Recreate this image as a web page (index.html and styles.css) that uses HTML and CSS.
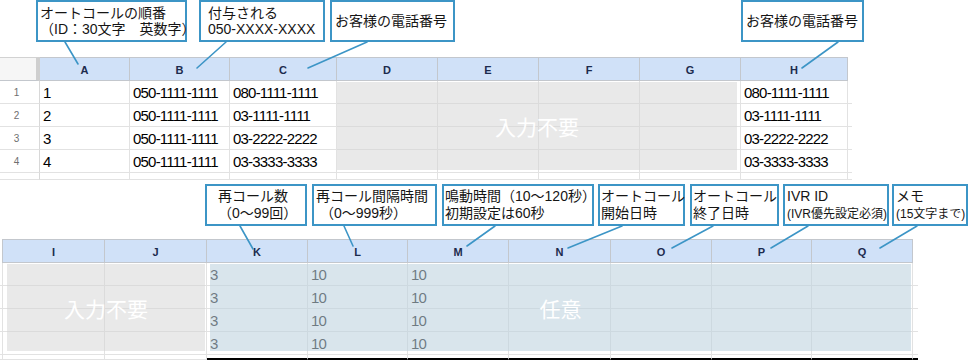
FILE: index.html
```html
<!DOCTYPE html>
<html lang="ja">
<head>
<meta charset="utf-8">
<link rel="stylesheet" href="styles.css">
</head>
<body>
<div class="page">
  <section class="part part-top">
    <div class="notes">
      <div class="note t1">オートコールの順番<br>（ID：30文字　英数字）</div>
      <div class="note t2">付与される<br>050-XXXX-XXXX</div>
      <div class="note t3 single">お客様の電話番号</div>
      <div class="note t4 single">お客様の電話番号</div>
    </div>
    <div class="stack stack-top">
      <div class="grid grid-top">
        <div class="corner"></div>
        <div class="ch">A</div><div class="ch">B</div><div class="ch">C</div><div class="ch">D</div>
        <div class="ch">E</div><div class="ch">F</div><div class="ch">G</div><div class="ch">H</div><div class="ch edge"></div>

        <div class="rh">1</div><div class="c">1</div><div class="c">050-1111-1111</div><div class="c">080-1111-1111</div>
        <div class="c"></div><div class="c"></div><div class="c"></div><div class="c"></div><div class="c">080-1111-1111</div><div class="c edge"></div>

        <div class="rh">2</div><div class="c">2</div><div class="c">050-1111-1111</div><div class="c">03-1111-1111</div>
        <div class="c"></div><div class="c"></div><div class="c"></div><div class="c"></div><div class="c">03-1111-1111</div><div class="c edge"></div>

        <div class="rh">3</div><div class="c">3</div><div class="c">050-1111-1111</div><div class="c">03-2222-2222</div>
        <div class="c"></div><div class="c"></div><div class="c"></div><div class="c"></div><div class="c">03-2222-2222</div><div class="c edge"></div>

        <div class="rh">4</div><div class="c">4</div><div class="c">050-1111-1111</div><div class="c">03-3333-3333</div>
        <div class="c"></div><div class="c"></div><div class="c"></div><div class="c"></div><div class="c">03-3333-3333</div><div class="c edge"></div>

        <div class="rh"></div><div class="c"></div><div class="c"></div><div class="c"></div>
        <div class="c"></div><div class="c"></div><div class="c"></div><div class="c"></div><div class="c"></div><div class="c edge"></div>
      </div>
      <div class="grid grid-top layer">
        <div class="shade gray top-gray">入力不要</div>
      </div>
    </div>
  </section>

  <section class="part part-bottom">
    <div class="notes">
      <div class="note b1">再コール数<br>（0〜99回）</div>
      <div class="note b2">再コール間隔時間<br>&nbsp;（0〜999秒）</div>
      <div class="note b3">鳴動時間（10〜120秒）<br>初期設定は60秒</div>
      <div class="note b4">オートコール<br>開始日時</div>
      <div class="note b5">オートコール<br>終了日時</div>
      <div class="note b6">IVR ID<br><span class="small">(IVR優先設定必須)</span></div>
      <div class="note b7">メモ<br><span class="small">(15文字まで)</span></div>
    </div>
    <div class="stack stack-bottom">
      <div class="grid grid-bottom">
        <div class="ch stub"></div>
        <div class="ch">I</div><div class="ch">J</div><div class="ch">K</div><div class="ch">L</div><div class="ch">M</div>
        <div class="ch">N</div><div class="ch">O</div><div class="ch">P</div><div class="ch">Q</div><div class="ch edge"></div>

        <div class="c stub"></div><div class="c"></div><div class="c"></div><div class="c">3</div><div class="c">10</div><div class="c">10</div>
        <div class="c"></div><div class="c"></div><div class="c"></div><div class="c"></div><div class="c edge"></div>

        <div class="c stub"></div><div class="c"></div><div class="c"></div><div class="c">3</div><div class="c">10</div><div class="c">10</div>
        <div class="c"></div><div class="c"></div><div class="c"></div><div class="c"></div><div class="c edge"></div>

        <div class="c stub"></div><div class="c"></div><div class="c"></div><div class="c">3</div><div class="c">10</div><div class="c">10</div>
        <div class="c"></div><div class="c"></div><div class="c"></div><div class="c"></div><div class="c edge"></div>

        <div class="c stub"></div><div class="c"></div><div class="c"></div><div class="c">3</div><div class="c">10</div><div class="c">10</div>
        <div class="c"></div><div class="c"></div><div class="c"></div><div class="c"></div><div class="c edge"></div>

        <div class="c stub"></div><div class="c"></div><div class="c"></div><div class="c cut"></div><div class="c cut"></div><div class="c cut"></div>
        <div class="c cut"></div><div class="c cut"></div><div class="c cut"></div><div class="c cut"></div><div class="c edge cut"></div>
      </div>
      <div class="grid grid-bottom layer">
        <div class="shade gray bottom-gray">入力不要</div>
        <div class="shade blue bottom-blue">任意</div>
      </div>
    </div>
  </section>

  <svg class="leaders" width="976" height="360" viewBox="0 0 976 360">
    <g stroke="#3c95c6" stroke-width="1.6" stroke-linecap="round" fill="none">
      <line x1="65" y1="42" x2="78" y2="64"/>
      <line x1="226" y1="42" x2="197" y2="68"/>
      <line x1="367" y1="42" x2="308" y2="68"/>
      <line x1="838" y1="42" x2="802" y2="68"/>
      <line x1="240" y1="226" x2="253" y2="249"/>
      <line x1="344" y1="226" x2="353" y2="246"/>
      <line x1="495" y1="226" x2="467" y2="246"/>
      <line x1="622" y1="226" x2="568" y2="248"/>
      <line x1="713" y1="226" x2="672" y2="248"/>
      <line x1="808" y1="226" x2="771" y2="248"/>
      <line x1="917" y1="226" x2="880" y2="248"/>
    </g>
  </svg>
</div>
</body>
</html>
```

FILE: styles.css
```css
* { box-sizing: border-box; }

html, body {
  margin: 0;
  padding: 0;
  background: #ffffff;
}

body {
  width: 976px;
  height: 360px;
  overflow: hidden;
  font-family: "Liberation Sans", "Noto Sans CJK JP", sans-serif;
  color: #111111;
}

.page {
  position: relative;
  width: 976px;
  height: 360px;
}

.part {
  display: flex;
  flex-direction: column;
}

.part-top { height: 180px; }
.part-bottom { height: 180px; padding-top: 4px; }

/* callouts */
.notes {
  display: flex;
  height: 42px;
  flex: none;
  align-items: stretch;
}

.note {
  border: 2px solid #3c95c6;
  background: #ffffff;
  font-size: 14px;
  line-height: 16px;
  padding: 3px 0 0 2px;
  white-space: nowrap;
  color: #151515;
}

.note.single {
  display: flex;
  align-items: center;
  padding-top: 0;
}

.note .small { font-size: 12px; }

.t1 { margin-left: 36px; width: 151px; }
.t2 { margin-left: 12px; width: 126px; padding-left: 7px; }
.t3 { margin-left: 5px; width: 125px; padding-left: 3px; }
.t4 { margin-left: 286px; width: 123px; padding-left: 3px; }

.part-bottom .note { line-height: 17px; padding-top: 2px; }
.b1 { margin-left: 205px; width: 102px; padding-left: 11px; }
.b2 { margin-left: 5px; width: 125px; padding-left: 2px; }
.b3 { margin-left: 5px; width: 152px; padding-left: 1px; }
.b4 { margin-left: 4px; width: 87px; padding-left: 1px; }
.b5 { margin-left: 5px; width: 89px; padding-left: 1px; }
.b6 { margin-left: 4px; width: 106px; padding-left: 2px; }
.b7 { margin-left: 3px; width: 76px; padding-left: 2px; }

/* sheet + overlay layer stacked in one grid cell */
.stack {
  display: grid;
  flex: none;
}

.stack > .grid {
  grid-area: 1 / 1;
}

.stack-top { margin-top: 15px; }
.stack-bottom { margin-top: 13px; }

.grid {
  display: grid;
}

.grid-top {
  grid-template-columns: 40px 90px 100px 107px 101px 101px 101px 101px 107px 4px;
  grid-template-rows: 24px 23px 23px 23px 23px 7px;
  width: 852px;
}

.grid-bottom {
  grid-template-columns: 3px 102px 102px 101px 100px 101px 102px 101px 100px 101px 5px;
  grid-template-rows: 24px 23px 23px 23px 23px 5px;
  width: 918px;
}

.layer {
  pointer-events: none;
}

.ch {
  background: #d0e1f8;
  border-top: 1px solid #c3c7cd;
  border-bottom: 1px solid #c3c7cd;
  border-right: 1px solid #c3c7cd;
  font-size: 11px;
  font-weight: bold;
  color: #1c2b4e;
  display: flex;
  align-items: center;
  justify-content: center;
  padding-top: 2px;
}

.ch.edge { background: #ffffff; border-right: none; border-top: none; border-bottom: none; }
.ch.stub { background: #ffffff; border-top: none; border-bottom: none; border-right: 1px solid #c3c7cd; }

.corner {
  background: #f6f6f6;
  border-top: 1px solid #d2d2d2;
  border-bottom: 1px solid #c3c7cd;
  border-right: 4px solid #cfcfcf;
}

.rh {
  border-right: 1px solid #d8d8d8;
  border-bottom: 1px solid #e2e2e2;
  font-size: 10px;
  color: #6f6f6f;
  display: flex;
  align-items: center;
  justify-content: center;
  padding-right: 6px;
}

.c {
  border-right: 1px solid #e2e2e2;
  border-bottom: 1px solid #e2e2e2;
  font-size: 15px;
  letter-spacing: -0.8px;
  color: #000000;
  display: flex;
  align-items: center;
  padding-left: 3px;
  white-space: nowrap;
}

.c.edge { border-right: none; }
.c.stub { border-right: 1px solid #e2e2e2; padding: 0; }
.c.cut { border-bottom: 2px solid #000000; }

/* shaded areas placed into the overlay layer */
.shade {
  display: flex;
  align-items: center;
  justify-content: center;
  color: #ffffff;
  font-family: "Noto Sans CJK JP", sans-serif;
  font-size: 21px;
}

.gray { background: rgba(212, 212, 212, 0.5); }
.blue { background: rgba(190, 210, 222, 0.58); }

.top-gray {
  grid-column: 5 / 9;
  grid-row: 2 / 6;
  margin: 1px 4px 3px 0;
}

.bottom-gray {
  grid-column: 2 / 4;
  grid-row: 2 / 6;
  margin: 1px 2px 4px 4px;
}

.bottom-blue {
  grid-column: 4 / 11;
  grid-row: 2 / 6;
  margin: 1px 2px 4px 3px;
}

.leaders {
  position: absolute;
  left: 0;
  top: 0;
  pointer-events: none;
}
```
